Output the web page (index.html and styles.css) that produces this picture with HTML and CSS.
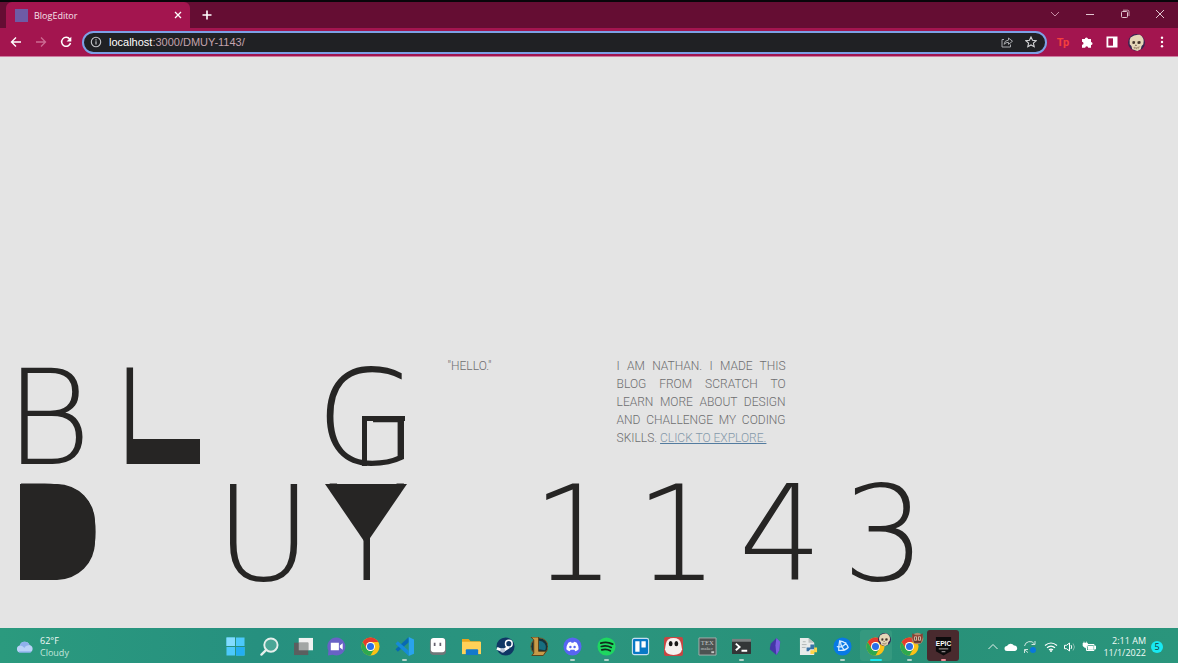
FILE: index.html
```
<!DOCTYPE html>
<html lang="en">
<head>
<meta charset="utf-8">
<title>BlogEditor</title>
<meta name="viewport" content="width=device-width, initial-scale=1">
<link rel="stylesheet" href="styles.css">
</head>
<body>
<svg class="defs" aria-hidden="true">
  <symbol id="chrome" viewBox="0 0 20 20">
    <circle cx="10" cy="10" r="9.5" fill="#fbc116"/>
    <path d="M1.8 5.2A9.5 9.5 0 0 1 18.2 5.3H10A4.7 4.7 0 0 0 5.8 12z" fill="#e33b2e"/>
    <path d="M1.8 5.2A9.5 9.5 0 0 0 10 19.5L14 12.4A4.7 4.7 0 0 1 5.9 12.3z" fill="#2da94f"/>
    <circle cx="10" cy="10" r="4.7" fill="#fff"/><circle cx="10" cy="10" r="3.7" fill="#2a6fe8"/>
  </symbol>
  <symbol id="skull" viewBox="0 0 20 20">
    <circle cx="10" cy="10" r="10" fill="#382451"/>
    <path d="M3 4Q8 0 14 1q6 4 4 11l-2 2-1 4-4 2-6-2-1-4-2-2q-1-5 1-8z" fill="#e6d8b8"/>
    <path d="M5 9q2-1.500 3.500 0l-.5 2.500-2.500.3zM11 9q2.500-1.500 4 0l-.5 2.500-3 .3zM9.300 12l1 2H8.500z" fill="#43342b"/>
    <path d="M6.500 16q4 1.500 7.500-1M8 15v3M10 16v2M12 15v3" fill="none" stroke="#8a745c" stroke-width=".7"/>
  </symbol>
</svg>

<header class="browser">
  <div class="tabstrip">
    <div class="tab">
      <span class="favicon"></span>
      <span class="tab-title">BlogEditor</span>
      <button class="tab-close" aria-label="Close tab"><svg viewBox="0 0 8 8" width="8" height="8"><path d="M1 1l6 6M7 1L1 7" stroke="#fff" stroke-width="1.300"/></svg></button>
    </div>
    <button class="new-tab" aria-label="New tab"><svg viewBox="0 0 10 10" width="10" height="10"><path d="M5 .5v9M.5 5h9" stroke="#fff" stroke-width="1.600"/></svg></button>
    <div class="window-controls">
      <button aria-label="Search tabs"><svg viewBox="0 0 10 10" width="10" height="10"><path d="M1 3l4 4 4-4" fill="none" stroke="#c58ba2"/></svg></button>
      <button aria-label="Minimize"><svg viewBox="0 0 10 10" width="10" height="10"><path d="M1 5.500h8" stroke="#e2c6d1"/></svg></button>
      <button aria-label="Restore"><svg viewBox="0 0 10 10" width="10" height="10"><rect x="1.500" y="2.500" width="6" height="6" rx="1" fill="none" stroke="#e2c6d1"/><path d="M3 1.200h4.500q1.500 0 1.500 1.500V7" fill="none" stroke="#e2c6d1" stroke-width=".8"/></svg></button>
      <button aria-label="Close"><svg viewBox="0 0 10 10" width="10" height="10"><path d="M1 1l8 8M9 1L1 9" stroke="#e2c6d1"/></svg></button>
    </div>
  </div>
  <div class="toolbar">
    <div class="nav">
      <button aria-label="Back"><svg viewBox="0 0 12 12" width="12" height="12"><path d="M11 6H1.500M6 1.500L1.500 6 6 10.500" fill="none" stroke="#fff" stroke-width="1.400"/></svg></button>
      <button aria-label="Forward"><svg viewBox="0 0 12 12" width="12" height="12"><path d="M1 6h9.500M6 1.500L10.500 6 6 10.500" fill="none" stroke="#cd6b93" stroke-width="1.300"/></svg></button>
      <button aria-label="Reload"><svg viewBox="0 0 12 12" width="12" height="12"><path d="M9.800 3.200A4.500 4.500 0 1 0 10.500 7" fill="none" stroke="#fff" stroke-width="1.500"/><path d="M11.300.8v4.700H6.600z" fill="#fff"/></svg></button>
    </div>
    <div class="address">
      <svg viewBox="0 0 12 12" width="12" height="12"><circle cx="6" cy="6" r="4.700" fill="none" stroke="#c3c5c8" stroke-width="1.100"/><path d="M6 5.300v3.200M6 3.200v1.200" stroke="#c3c5c8" stroke-width="1.200"/></svg>
      <a class="url" href="#"><span class="host">localhost</span>:3000/DMUY-1143/</a>
      <button aria-label="Share"><svg viewBox="0 0 12 12" width="12" height="12"><path d="M3 3.500H1v7.500h8.500V8.500" fill="none" stroke="#a9abae"/><path d="M3 8.300q.5-4 4.500-4.200V2l4 3.200-4 3.200V6.300Q5 6.200 3 8.300z" fill="none" stroke="#a9abae"/></svg></button>
      <button aria-label="Bookmark"><svg viewBox="0 0 12 12" width="12" height="12"><path d="M6 1l1.500 3.300 3.600.4-2.700 2.400.8 3.600L6 8.900l-3.200 1.800.8-3.600L.9 4.700l3.600-.4z" fill="none" stroke="#d5d6d8" stroke-width="1.100"/></svg></button>
    </div>
    <div class="extensions">
      <button class="tp" aria-label="Tp extension">Tp</button>
      <button aria-label="Extensions"><svg viewBox="0 0 12 12" width="12" height="12"><path d="M1 3h2.800a1.600 1.600 0 1 1 3.200 0h3v3a1.500 1.500 0 1 1 0 3v2.800H7.200a1.500 1.500 0 0 0-3 0H1V8.800a1.500 1.500 0 0 0 0-3z" fill="#fff"/></svg></button>
      <button aria-label="Side panel"><svg viewBox="0 0 12 12" width="12" height="12"><path d="M.5.500h11v11H.5z" fill="#fff"/><path d="M2.300 2.300H7v7.400H2.300z" fill="#a3154f"/></svg></button>
      <button aria-label="Profile"><svg width="17" height="17"><use href="#skull"/></svg></button>
      <button aria-label="Menu"><svg viewBox="0 0 12 12" width="12" height="12" fill="#fff"><circle cx="6" cy="1.700" r="1.200"/><circle cx="6" cy="6" r="1.200"/><circle cx="6" cy="10.300" r="1.200"/></svg></button>
    </div>
  </div>
</header>

<main class="page">
  <h1 class="title">
    <span class="start">B</span><span class="start l">L</span><span></span><span class="g">G</span>
  </h1>
  <section class="intro">
    <p>"HELLO."</p>
    <p class="about">I AM NATHAN. I MADE THIS BLOG FROM SCRATCH TO LEARN MORE ABOUT DESIGN AND CHALLENGE MY CODING SKILLS. <a href="#">CLICK TO EXPLORE.</a></p>
  </section>
  <h2 class="title second">
    <span class="start d">D</span><span></span><span>U</span><span class="y">Y</span><span></span><span>1</span><span>1</span><span>4</span><span>3</span>
  </h2>
</main>

<footer class="taskbar">
  <button class="weather">
    <svg viewBox="0 0 18 12" width="18" height="12"><path d="M4 11.500a3.500 3.500 0 0 1-.3-6.900A5.200 5.200 0 0 1 13.500 4a3.900 3.900 0 0 1 .5 7.500z" fill="#b9d2f8"/><path d="M3.700 4.600A5.200 5.200 0 0 1 13.500 4Q9 4.500 8.500 7 6 4.500 3.700 4.600z" fill="#8fb0ec"/><path d="M3 11h12" stroke="#7fa5ea"/></svg>
    <span>62°F<br><span class="dim">Cloudy</span></span>
  </button>
  <nav class="apps">
    <button aria-label="Start"><svg viewBox="0 0 20 20"><path d="M.5.500h9v9h-9zM10.500.500h9v9h-9zM.5 10.500h9v9h-9zM10.500 10.500h9v9h-9z" fill="#4cc9fb"/><path d="M.5.500h9v9h-9z" fill="#82dcff"/><path d="M10.500 10.500h9v9h-9z" fill="#23aef2"/></svg></button>
    <button aria-label="Search"><svg viewBox="0 0 20 20"><circle cx="11.500" cy="8.500" r="7" fill="#4aa696" stroke="#e6efec" stroke-width="2"/><path d="M6.500 13.500l-5 5" stroke="#e6efec" stroke-width="2.400" stroke-linecap="round"/></svg></button>
    <button aria-label="Task view"><svg viewBox="0 0 20 20"><path d="M5 1h15v13H5z" fill="#f0f1f1"/><path d="M0 6h15v13H0z" fill="#5b5f5f"/><path d="M5 6h10v8H5z" fill="#a2a6a5"/></svg></button>
    <button aria-label="Chat"><svg viewBox="0 0 20 20"><path d="M10 .5a9.500 9.500 0 1 1-4 18.200L1 19.500l.5-5A9.500 9.500 0 0 1 10 .500z" fill="#6862c6"/><path d="M4 6h8.500v8H4zM13.500 9l3-2.500v7l-3-2.500z" fill="#fff"/></svg></button>
    <button aria-label="Chrome"><svg><use href="#chrome"/></svg></button>
    <button class="open" aria-label="Visual Studio Code"><svg viewBox="0 0 20 20"><path d="M14.500 0v5.500L3 15.500.5 13z" fill="#0869b3"/><path d="M14.500 20v-5.500L3 4.500.5 7z" fill="#168bd8"/><path d="M14.500 0L20 2.500v15L14.500 20z" fill="#29a3ed"/></svg></button>
    <button aria-label="Notes"><svg viewBox="0 0 20 20"><rect x="2" y="1" width="17" height="18" rx="4" fill="#6e7779"/><rect x="3" y="1" width="15" height="15" rx="3" fill="#fff"/><path d="M7 6v3.500M13 6v3.500" stroke="#66616f" stroke-width="1.800"/></svg></button>
    <button aria-label="File Explorer"><svg viewBox="0 0 20 20"><path d="M0 2h7l2 2.500h10v6H0z" fill="#e9a51c"/><path d="M0 5h20v13H0z" fill="#ffd158"/><path d="M4 14q0-1 1-1h11q1 0 1 1v5H4z" fill="#1379cc"/></svg></button>
    <button aria-label="Steam"><svg viewBox="0 0 20 20"><circle cx="10" cy="10" r="9.500" fill="#103765"/><path d="M1 12l6.500 2.500 6-4" fill="none" stroke="#fff" stroke-width="3"/><circle cx="13.500" cy="7" r="3.500" fill="#103765" stroke="#fff" stroke-width="1.600"/><circle cx="7" cy="14" r="2.500" fill="#b9c6d8"/></svg></button>
    <button aria-label="League"><svg viewBox="0 0 20 20"><circle cx="11" cy="10" r="9" fill="#14323a" stroke="#765b29"/><path d="M10 4a7 7 0 0 1 7 10l-7-1z" fill="#176e80"/><path d="M2 0h8v15h8l-3 4.500H3L5 17V3z" fill="#c89a48" stroke="#58401a"/></svg></button>
    <button class="open" aria-label="Discord"><svg viewBox="0 0 20 20"><circle cx="10" cy="10" r="9.500" fill="#5865f2"/><path d="M5.500 6q2-1 3-1l.4 1h2.200l.4-1q1 0 3 1 2 3 2 7-1.500 1.500-3.500 2l-1-1.500H8L7 15q-2-.5-3.500-2 0-4 2-7z" fill="#fff"/><circle cx="7.800" cy="10.500" r="1.300" fill="#5865f2"/><circle cx="12.200" cy="10.500" r="1.300" fill="#5865f2"/></svg></button>
    <button class="open" aria-label="Spotify"><svg viewBox="0 0 20 20"><circle cx="10" cy="10" r="9.500" fill="#1ed760"/><path d="M4 6.500q6.500-2 12.500 1M4.500 10q5.500-1.500 10.500 1M5 13.500q5-1.500 9 1" fill="none" stroke="#102a1b" stroke-width="1.800" stroke-linecap="round"/></svg></button>
    <button aria-label="Trello"><svg viewBox="0 0 20 20"><rect x="1.500" y="1.500" width="17" height="17" rx="2" fill="#0879c6" stroke="#c5dfef" stroke-width="1.200"/><path d="M4.500 4.500H9v11H4.500zM11 4.500h4.500V11H11z" fill="#fff"/></svg></button>
    <button aria-label="Ghost"><svg viewBox="0 0 20 20"><rect width="20" height="20" rx="2" fill="#c64643"/><path d="M2 7q1-6 8-6t8 6l1 6q-1 6-9 6T1 13z" fill="#f5f1ef"/><ellipse cx="7" cy="7" rx="2" ry="2.700" fill="#191919"/><ellipse cx="13" cy="7" rx="2" ry="2.700" fill="#191919"/></svg></button>
    <button aria-label="TeXmaker"><svg viewBox="0 0 20 20"><path d="M1 1h18v18H1z" fill="#4d5352" stroke="#a7afad"/><text x="3" y="8" class="tex">TEX</text><text x="3" y="14" class="tex small">maker</text><path d="M14 15h3v2h-3z" fill="#c3c8c6"/></svg></button>
    <button class="open" aria-label="Terminal"><svg viewBox="0 0 20 20"><rect y="2" width="20" height="16" rx="1" fill="#333637"/><path d="M0 2h20v3H0z" fill="#7b8080"/><path d="M4 7l4 3.500L4 14M10 14.500h6" fill="none" stroke="#fff" stroke-width="2"/></svg></button>
    <button aria-label="Obsidian"><svg viewBox="0 0 20 20"><path d="M12 1l4 4-1 9-3 5-7-6 1-6z" fill="#4536a8"/><path d="M12 1l4 4-1 9-3 5-1-10z" fill="#7a5fdf"/></svg></button>
    <button aria-label="Python file"><svg viewBox="0 0 20 20"><path d="M1 1h9l6 5v13H1z" fill="#e8ebea"/><path d="M10 1v5h6" fill="#bbc1c0"/><path d="M4 5h3M3 8h5M3 11h4" stroke="#adb4b3"/><path d="M12 8h4v5h-4l-2 2H8v-4h4z" fill="#3774a8"/><path d="M16 11h3v5h-3v2h-4v-4h4z" fill="#ffd54a"/></svg></button>
    <button class="open" aria-label="Battle.net"><svg viewBox="0 0 20 20"><circle cx="10" cy="10" r="9.500" fill="#0879e5"/><path d="M7 4q7 1 9 7-4 4-10 3 0-5 1-10zM4 10q6 2 10-4M8 5q0 6 5 9" fill="none" stroke="#d7edff" stroke-width="1.300"/></svg></button>
    <button class="open active" aria-label="Chrome, first profile"><svg><use href="#chrome"/></svg><svg class="avatar"><use href="#skull"/></svg></button>
    <button class="open" aria-label="Chrome, second profile"><svg><use href="#chrome"/></svg><svg class="avatar" viewBox="0 0 20 20"><circle cx="10" cy="10" r="9" fill="#a98a6c"/><path d="M2 2l5 3h6l5-3v7l-3 8H5L2 9z" fill="#8c3f32"/><path d="M5 7h4v6H5zM11 7h4v6h-4z" fill="#e4d8bd"/><path d="M7 8v4M13 8v4M5 15h10" stroke="#433c33" stroke-width="1.500"/></svg></button>
    <button class="open epic" aria-label="Epic Games"><svg viewBox="0 0 20 20"><path d="M2 0h16v15l-8 4.500L2 15z" fill="#0c0b0c"/><text x="10" y="9" class="epic-text">EPIC</text><path d="M5 12.500h10M8 15.500h4" stroke="#b9b0b1"/></svg></button>
  </nav>
  <div class="tray">
    <svg viewBox="0 0 12 12" width="12" height="12"><path d="M1.500 8L6 3.500 10.500 8" fill="none" stroke="#e8f3ef"/></svg>
    <svg viewBox="0 0 14 12" width="14" height="12"><path d="M3 10a2.500 2.500 0 0 1 0-5A4 4 0 0 1 10 4.500 2.800 2.800 0 0 1 11 10z" fill="#fff"/></svg>
    <svg viewBox="0 0 14 14" width="14" height="14"><path d="M1.500 6a5.500 5.500 0 0 1 10-2M12 1v3.500H8.500M5 12.500A5 5 0 0 1 2 9.500M1.500 13V9.500H5" fill="none" stroke="#cfe5df"/><circle cx="10" cy="10" r="3" fill="#0878dc"/></svg>
    <svg class="wifi" viewBox="0 0 14 12" width="14" height="12"><path d="M1 4.500q6-5 12 0M3 6.800q4-3.400 8 0M5 9q2-1.600 4 0" fill="none" stroke="#fff" stroke-width="1.200"/><circle cx="7" cy="10" r="1" fill="#fff"/></svg>
    <svg viewBox="0 0 14 12" width="14" height="12"><path d="M1.500 4.300h2L6.500 2v8l-3-2.300h-2zM8 4q1.500 2 0 4" fill="none" stroke="#fff"/><path d="M10 2.500q3 3.500 0 7" fill="none" stroke="#86beb0"/></svg>
    <svg viewBox="0 0 14 12" width="14" height="12"><path d="M3 3.500h9v6H4.500V6" fill="none" stroke="#fff"/><path d="M6 5h5v3.500H6zM12.500 5H14v3h-1.500zM1 2h4.500v3L3.500 7 1 5zM2 .5v2M4.500.500v2" fill="#fff" stroke="#fff" stroke-width=".6"/></svg>
    <time class="clock">2:11 AM<br>11/1/2022</time>
    <span class="badge">5</span>
  </div>
</footer>
</body>
</html>
```

FILE: styles.css
```
* { box-sizing: border-box; }
body {
  margin: 0;
  min-height: 100vh;
  display: flex;
  flex-direction: column;
  background: #e4e4e4;
  font-family: "Open Sans", "Noto Sans", sans-serif;
}
button {
  display: flex;
  align-items: center;
  justify-content: center;
  padding: 0;
  border: 0;
  background: none;
  color: inherit;
  font: inherit;
}
svg { flex: none; }
.defs { position: absolute; width: 0; height: 0; }

/* Browser frame */
.browser { border-top: 2px solid #08060a; background: #650d33; }
.tabstrip { display: flex; height: 26px; padding: 0 1px 0 6px; }
.tab {
  display: flex;
  align-items: center;
  width: 184px;
  padding: 0 8px;
  border-radius: 6px 6px 0 0;
  background: #a3154f;
}
.favicon { width: 13px; height: 13px; margin: 0 6px 0 1px; background: #6e5ba5; }
.tab-title { flex: 1; color: #f6e3eb; font-size: 9px; }
.new-tab { width: 34px; }
.window-controls { display: flex; margin-left: auto; }
.window-controls button { width: 35px; padding-bottom: 2px; }
.toolbar {
  display: flex;
  align-items: center;
  height: 29px;
  padding: 0 4px 0 3px;
  background: #a3154f;
  border-bottom: 1px solid #cd7ca0;
}
.nav, .extensions { display: flex; }
.nav button, .extensions button { width: 25px; height: 24px; }
.address {
  display: flex;
  flex: 1;
  align-items: center;
  height: 23px;
  margin: 0 2px 0 4px;
  padding: 0 6px;
  border: 2px solid #7da0e6;
  border-radius: 12px;
  background: #202124;
}
.url {
  flex: 1;
  margin-left: 7px;
  color: #c3a3ac;
  font-family: "Liberation Sans", sans-serif;
  font-size: 11px;
  text-decoration: none;
}
.host { color: #fff; }
.address button { width: 25px; height: 18px; }
.address button:last-child { width: 24px; margin-right: -4px; }
.extensions .tp {
  padding-left: 3px;
  color: #f4403d;
  font-family: Roboto, sans-serif;
  font-size: 11px;
  font-weight: 700;
}

/* Blog landing page */
.page {
  display: grid;
  grid-template-columns: repeat(9, minmax(0, 1fr));
  align-content: end;
  flex: 1;
  width: 79%;
  margin-left: 5px;
  padding-bottom: 36px;
}
.title {
  display: grid;
  grid-column: span 4;
  grid-template-columns: subgrid;
  margin: 0;
  color: #262524;
  font-family: "DejaVu Sans", sans-serif;
  font-size: 132px;
  font-weight: 200;
  line-height: 116px;
  text-align: center;
}
.second { grid-column: 1 / -1; }
.title span { position: relative; height: 116px; }
.title .start { text-align: left; }
.title .l { padding-left: 2px; }
.l::after, .d::after, .y::after, .g::after { content: ""; position: absolute; }
.l::after { left: 19px; bottom: 12px; width: 73px; height: 25px; background: #262524; }
.d::after { left: 15px; bottom: 12px; width: 75px; height: 96px; border-radius: 0 38px 38px 0; background: #262524; }
.g::after { left: 47px; top: 56px; width: 38px; height: 45px; border: solid #262524; border-width: 5px 0 0 5px; }
.y::after {
  left: 10px;
  top: 8px;
  border: solid transparent;
  border-width: 60px 41px 0;
  border-top-color: #262524;
}
.intro {
  display: grid;
  grid-column: 5 / -1;
  grid-template-columns: 169px 169px;
  align-content: start;
  margin-top: -3px;
  padding: 0 0 0 29px;
  color: #6e6e70;
  font-family: Roboto, sans-serif;
  font-size: 12px;
  font-weight: 300;
  line-height: 18px;
}
.intro p { margin: 0; }
.about { text-align: justify; }
.about a { color: #8499aa; text-decoration-color: #527b9f; }

/* Taskbar */
.taskbar {
  display: grid;
  grid-template-columns: 1fr 63% 1fr;
  align-items: center;
  height: 35px;
  background: linear-gradient(90deg, #2b9a7e, #26907f 22%, #2b957e 50%, #289078 75%, #2a957c);
  color: #f1faf7;
  font-size: 9px;
}
.weather {
  justify-content: start;
  gap: 6px;
  padding: 2px 0 0 16px;
  line-height: 12px;
  text-align: left;
}
.dim { color: #c3e5dc; }
.apps { display: grid; grid-template-columns: repeat(22, 1fr); padding-left: 1px; }
.apps button { position: relative; height: 35px; padding-top: 1px; }
.apps svg { width: 19px; height: 19px; }
.open::after {
  content: "";
  position: absolute;
  bottom: 2px;
  width: 5px;
  height: 2px;
  border-radius: 1px;
  background: #b2d3ca;
}
.apps .active { height: 31px; margin: 2px 1px; border-radius: 3px; background: #35997f; }
.active::after { bottom: 0; width: 12px; background: #18e9f2; }
.apps .avatar { position: absolute; right: 2px; top: 4px; width: 13px; height: 13px; }
.apps .active .avatar { right: 1px; top: 3px; }
.apps .epic { height: 31px; margin: 2px 1px; border-radius: 3px; background: #492a2e; }
.epic::after { bottom: 0; background: #ef8e98; }
.epic-text { fill: #fff; font: 700 7px "Liberation Sans", sans-serif; text-anchor: middle; }
.tex { fill: #c3c8c6; font: 7px "Liberation Serif", serif; }
.small { font-size: 5px; }
.tray { display: flex; align-items: center; justify-content: end; gap: 5px; padding: 2px 15px 0 0; }
.wifi { margin-left: 2px; }
.clock { margin-left: 2px; line-height: 12px; text-align: right; white-space: nowrap; }
.badge {
  width: 12px;
  height: 12px;
  border-radius: 50%;
  background: #18e9f2;
  color: #153b3b;
  line-height: 12px;
  text-align: center;
}
```
